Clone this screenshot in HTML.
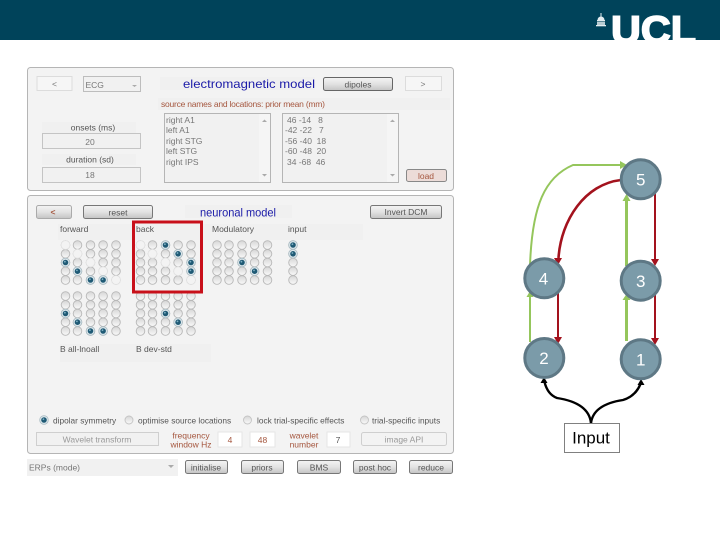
<!DOCTYPE html>
<html><head><meta charset="utf-8"><style>
html,body{margin:0;padding:0;background:#fff;width:720px;height:540px;overflow:hidden}
svg{display:block;position:absolute;left:0;top:0}
text{font-family:"Liberation Sans",sans-serif}
.t{font-size:8.5px;fill:#777}
.d{font-size:8.5px;fill:#555}
.o{font-size:8.3px;fill:#555}
.m{font-size:8.5px;fill:#999}
.b{font-size:12px;fill:#1a1aa8}
.r{font-size:8.5px;fill:#a5573f}
.w{font-size:17px;fill:#fff}
</style></head><body>
<svg width="720" height="540" viewBox="0 0 720 540" xmlns="http://www.w3.org/2000/svg">
<defs>
<linearGradient id="btn" x1="0" y1="0" x2="0" y2="1"><stop offset="0" stop-color="#f4f4f4"/><stop offset=".5" stop-color="#e2e2e2"/><stop offset="1" stop-color="#c4c4c4"/></linearGradient>
<linearGradient id="rf" x1="0" y1="0" x2="0" y2="1"><stop offset="0" stop-color="#d6d6d6"/><stop offset="1" stop-color="#fafafa"/></linearGradient>
<clipPath id="hc"><rect x="0" y="0" width="720" height="40"/></clipPath>
<g id="c"><circle cx="0" cy="0" r="4.3"/><circle cx="0" cy="8.8" r="4.3"/><circle cx="0" cy="17.5" r="4.3"/><circle cx="0" cy="26.2" r="4.3"/><circle cx="0" cy="35" r="4.3"/></g>
<g id="g5"><use href="#c" x="0"/><use href="#c" x="12"/><use href="#c" x="25"/><use href="#c" x="37.6"/><use href="#c" x="50.5"/></g>
<g id="on"><circle r="4.3" fill="#dfe8ec" stroke="#a9bcc4" stroke-width=".8"/><circle r="2.8" fill="#1f5a75"/><circle cx="-.6" cy="-.8" r=".9" fill="#7fb0c4"/></g>
<g id="off"><circle r="4.4" fill="#f3f3f3" stroke="#e2e2e2" stroke-width=".8"/></g>
</defs>
<rect x="0" y="0" width="720" height="40" fill="#00435a"/>
<g clip-path="url(#hc)"><text x="611" y="43" font-size="39" font-weight="700" fill="#fff" stroke="#fff" stroke-width="1.600" textLength="85" lengthAdjust="spacingAndGlyphs">UCL</text></g>
<g fill="#e4edf0"><rect x="600.500" y="13" width="1" height="4"/><path d="M597.500 20a3.500 3.500 0 0 1 7 0z"/><rect x="597" y="20" width="8" height="1"/><rect x="597" y="21.500" width="8" height="3.500" fill="#b9ccd3"/><rect x="596" y="25" width="10" height="1.300"/></g>

<g style="filter:blur(.35px)">
<rect x="27.500" y="67.500" width="426" height="123" rx="3" fill="#f3f3f3" stroke="#b5b5b5"/>
<rect x="37" y="76.500" width="35" height="14" fill="#f6f6f6" stroke="#dcdcdc"/>
<text x="54.500" y="87" class="t" text-anchor="middle">&lt;</text>
<rect x="83.500" y="76.500" width="57" height="15" fill="#f1f1f1" stroke="#bdbdbd"/>
<text x="85.500" y="88" class="t">ECG</text>
<path d="M132 85h5l-2.500 2z" fill="#aaa"/>
<rect x="160" y="77" width="155" height="13" fill="#f0f0f0"/>
<text x="183" y="88" class="b" textLength="132" lengthAdjust="spacingAndGlyphs">electromagnetic model</text>
<rect x="323.500" y="77.500" width="69" height="13" rx="2" fill="url(#btn)" stroke="#666"/>
<text x="358" y="87.500" class="d" text-anchor="middle">dipoles</text>
<rect x="405.500" y="76.500" width="36" height="14" fill="#f6f6f6" stroke="#dcdcdc"/>
<text x="423" y="87" class="t" text-anchor="middle">&gt;</text>
<rect x="158" y="98" width="292" height="12" fill="#f0f0f0"/>
<text x="161" y="107" class="r" textLength="164">source names and locations: prior mean (mm)</text>

<rect x="42" y="122" width="94" height="11" fill="#f0f0f0"/>
<text x="93" y="130.500" class="d" text-anchor="middle">onsets (ms)</text>
<rect x="42.500" y="133.500" width="98" height="15" fill="#f1f1f1" stroke="#c4c4c4"/>
<text x="90" y="145" class="t" text-anchor="middle">20</text>
<rect x="42" y="154" width="94" height="11" fill="#f0f0f0"/>
<text x="90" y="162.500" class="d" text-anchor="middle">duration (sd)</text>
<rect x="42.500" y="167.500" width="98" height="15" fill="#f1f1f1" stroke="#c4c4c4"/>
<text x="90" y="178" class="t" text-anchor="middle">18</text>

<rect x="164.500" y="113.500" width="106" height="69" fill="#f1f1f1" stroke="#b5b5b5"/>
<rect x="259" y="114" width="11" height="68" fill="#f5f5f5"/>
<path d="M262 122h5l-2.500-2.500zM262 174h5l-2.500 2.500z" fill="#aaa"/>
<text class="t"><tspan x="166" y="123">right A1</tspan><tspan x="166" y="133">left A1</tspan><tspan x="166" y="144">right STG</tspan><tspan x="166" y="154">left STG</tspan><tspan x="166" y="165">right IPS</tspan></text>
<rect x="282.500" y="113.500" width="116" height="69" fill="#f1f1f1" stroke="#b5b5b5"/>
<rect x="387" y="114" width="11" height="68" fill="#f5f5f5"/>
<path d="M390 122h5l-2.500-2.500zM390 174h5l-2.500 2.500z" fill="#aaa"/>
<text class="t" xml:space="preserve"><tspan x="287" y="123">46 -14   8</tspan><tspan x="285" y="133">-42 -22   7</tspan><tspan x="285" y="144">-56 -40  18</tspan><tspan x="285" y="154">-60 -48  20</tspan><tspan x="287" y="165">34 -68  46</tspan></text>
<rect x="406.500" y="169.500" width="40" height="12" rx="2" fill="#ecdcd8" stroke="#888"/>
<text x="426" y="179" class="r" text-anchor="middle">load</text>

<rect x="27.500" y="195.500" width="426" height="258" rx="3" fill="#f3f3f3" stroke="#b5b5b5"/>
<rect x="36.500" y="205.500" width="35" height="13" rx="2" fill="url(#btn)" stroke="#aaa"/>
<text x="53" y="215" class="r" text-anchor="middle" font-weight="700">&lt;</text>
<rect x="83.500" y="205.500" width="69" height="13" rx="2" fill="url(#btn)" stroke="#777"/>
<text x="118" y="215.500" class="d" text-anchor="middle">reset</text>
<rect x="185" y="205" width="107" height="13" fill="#f0f0f0"/>
<text x="200" y="216.500" class="b" textLength="76" lengthAdjust="spacingAndGlyphs">neuronal model</text>
<rect x="370.500" y="205.500" width="71" height="13" rx="2" fill="url(#btn)" stroke="#777"/>
<text x="406" y="215" class="d" text-anchor="middle">Invert DCM</text>
<rect x="58" y="224" width="305" height="16" fill="#f0f0f0"/>
<text class="d" y="232"><tspan x="60">forward</tspan><tspan x="136">back</tspan><tspan x="212">Modulatory</tspan><tspan x="288">input</tspan></text>

<g fill="url(#rf)" stroke="#b8b8b8" stroke-width=".9">
<use href="#g5" x="65.500" y="245"/>
<use href="#g5" x="140.500" y="245"/>
<use href="#g5" x="217" y="245"/>
<use href="#c" x="293" y="245"/>
<use href="#g5" x="65.500" y="296"/>
<use href="#g5" x="140.500" y="296"/>
</g>
<use href="#off" x="65.500" y="245"/><use href="#off" x="77.500" y="253.800"/><use href="#off" x="90.500" y="262.500"/><use href="#off" x="103.100" y="271.200"/><use href="#off" x="116" y="280"/>
<use href="#off" x="140.500" y="245"/><use href="#off" x="152.500" y="253.800"/><use href="#off" x="165.500" y="262.500"/><use href="#off" x="178.100" y="271.200"/><use href="#off" x="191" y="280"/>

<use href="#on" x="65.500" y="262.500"/><use href="#on" x="77.500" y="271.200"/><use href="#on" x="90.500" y="280"/><use href="#on" x="103.100" y="280"/>
<use href="#on" x="165.500" y="245"/><use href="#on" x="178.100" y="253.800"/><use href="#on" x="191" y="262.500"/><use href="#on" x="191" y="271.200"/>
<use href="#on" x="242" y="262.500"/><use href="#on" x="254.600" y="271.200"/>
<use href="#on" x="293" y="245"/><use href="#on" x="293" y="253.800"/>
<use href="#on" x="65.500" y="313.500"/><use href="#on" x="77.500" y="322.200"/><use href="#on" x="90.500" y="331"/><use href="#on" x="103.100" y="331"/>
<use href="#on" x="165.500" y="313.500"/><use href="#on" x="178.100" y="322.200"/>

<rect x="60" y="344" width="151" height="18" fill="#f0f0f0"/>
<text class="d" y="352"><tspan x="60">B all-lnoall</tspan><tspan x="136">B dev-std</tspan></text>

<use href="#on" x="44" y="420"/>
<g fill="url(#rf)" stroke="#c4c4c4" stroke-width=".9"><circle cx="129" cy="420" r="4"/><circle cx="247.500" cy="420" r="4"/><circle cx="364.500" cy="420" r="4"/></g>
<text class="o" y="423.500"><tspan x="53">dipolar symmetry</tspan><tspan x="138">optimise source locations</tspan><tspan x="257">lock trial-specific effects</tspan><tspan x="372">trial-specific inputs</tspan></text>

<rect x="36.500" y="432.500" width="122" height="13" fill="#f1f1f1" stroke="#cfcfcf"/>
<text x="97" y="442.500" class="m" text-anchor="middle">Wavelet transform</text>
<text x="191" y="438.500" class="r" text-anchor="middle">frequency</text>
<text x="191" y="447.500" class="r" text-anchor="middle">window Hz</text>
<rect x="218" y="432" width="24" height="15" fill="#fff" stroke="#e6e6e6"/>
<text x="230" y="443" class="r" text-anchor="middle">4</text>
<rect x="250" y="432" width="25" height="15" fill="#fff" stroke="#e6e6e6"/>
<text x="262.500" y="443" class="r" text-anchor="middle">48</text>
<text x="304" y="438.500" class="r" text-anchor="middle">wavelet</text>
<text x="304" y="447.500" class="r" text-anchor="middle">number</text>
<rect x="327" y="432" width="23" height="15" fill="#fff" stroke="#e6e6e6"/>
<text x="338" y="443" class="d" text-anchor="middle">7</text>
<rect x="361.500" y="432.500" width="85" height="13" rx="2" fill="#f3f3f3" stroke="#cfcfcf"/>
<text x="404" y="442.500" class="m" text-anchor="middle">image API</text>

<rect x="27" y="459" width="151" height="17" fill="#f1f1f1"/>
<text x="29" y="470.500" class="t">ERPs (mode)</text>
<path d="M168 465h6l-3 3z" fill="#aaa"/>
<g fill="url(#btn)" stroke="#777">
<rect x="185.500" y="460.500" width="42" height="13" rx="2"/>
<rect x="241.500" y="460.500" width="42" height="13" rx="2"/>
<rect x="297.500" y="460.500" width="43" height="13" rx="2"/>
<rect x="353.500" y="460.500" width="43" height="13" rx="2"/>
<rect x="409.500" y="460.500" width="43" height="13" rx="2"/>
</g>
<text class="d" y="470.500" text-anchor="middle"><tspan x="206">initialise</tspan><tspan x="262">priors</tspan><tspan x="319">BMS</tspan><tspan x="375">post hoc</tspan><tspan x="431">reduce</tspan></text>
</g>

<rect x="133.500" y="222" width="68" height="70" fill="none" stroke="#c8101a" stroke-width="3"/>

<g fill="none" stroke="#95c65c">
<path d="M530 266C532 205 545 177 573 165H620" stroke-width="2"/>
<path d="M626.500 266V198" stroke-width="3"/>
<path d="M530 342V295" stroke-width="2"/>
<path d="M626.500 341V298" stroke-width="3"/>
</g>
<g fill="#95c65c"><path d="M627 165l-7-4v8z"/><path d="M626.500 194l-4 7h8z"/><path d="M530 291l-3.500 6h7z"/><path d="M626.500 294l-4 6h8z"/></g>
<g fill="none" stroke="#a3121d">
<path d="M621 180C585 184 561 220 558.500 258" stroke-width="2.600"/>
<path d="M655 193V260" stroke-width="2"/>
<path d="M558 292V338" stroke-width="2"/>
<path d="M655 293V339" stroke-width="2"/>
</g>
<g fill="#a3121d"><path d="M558 265l-4-7h8z"/><path d="M655 266l-4-7h8z"/><path d="M558 344l-4-7h8z"/><path d="M655 345l-4-7h8z"/></g>

<g fill="none" stroke="#000" stroke-width="2.400">
<path d="M591 423C589 405 570 400 557 398C549 395 546 388 544.500 382"/>
<path d="M591 423C593 407 610 402 623 400C633 397 638 390 640.500 384"/>
</g>
<path d="M544 377l-3.500 6h7zM641 379l-3.500 6h7z" fill="#000"/>

<g fill="#7b9ba9" stroke="#5e7885" stroke-width="3">
<circle cx="640.700" cy="179.300" r="19.500"/>
<circle cx="544.300" cy="278.300" r="19.500"/>
<circle cx="640.700" cy="280.700" r="19.500"/>
<circle cx="544.300" cy="358" r="19.500"/>
<circle cx="640.700" cy="359.300" r="19.500"/>
</g>
<text class="w" text-anchor="middle"><tspan x="640.700" y="185.500">5</tspan><tspan x="543.500" y="284.500">4</tspan><tspan x="640.700" y="287">3</tspan><tspan x="544" y="364">2</tspan><tspan x="640.700" y="365.500">1</tspan></text>

<rect x="564.500" y="423.500" width="55" height="29" fill="#fff" stroke="#808080"/>
<text x="591" y="443.500" font-size="17" fill="#000" text-anchor="middle">Input</text>
</svg>
</body></html>
